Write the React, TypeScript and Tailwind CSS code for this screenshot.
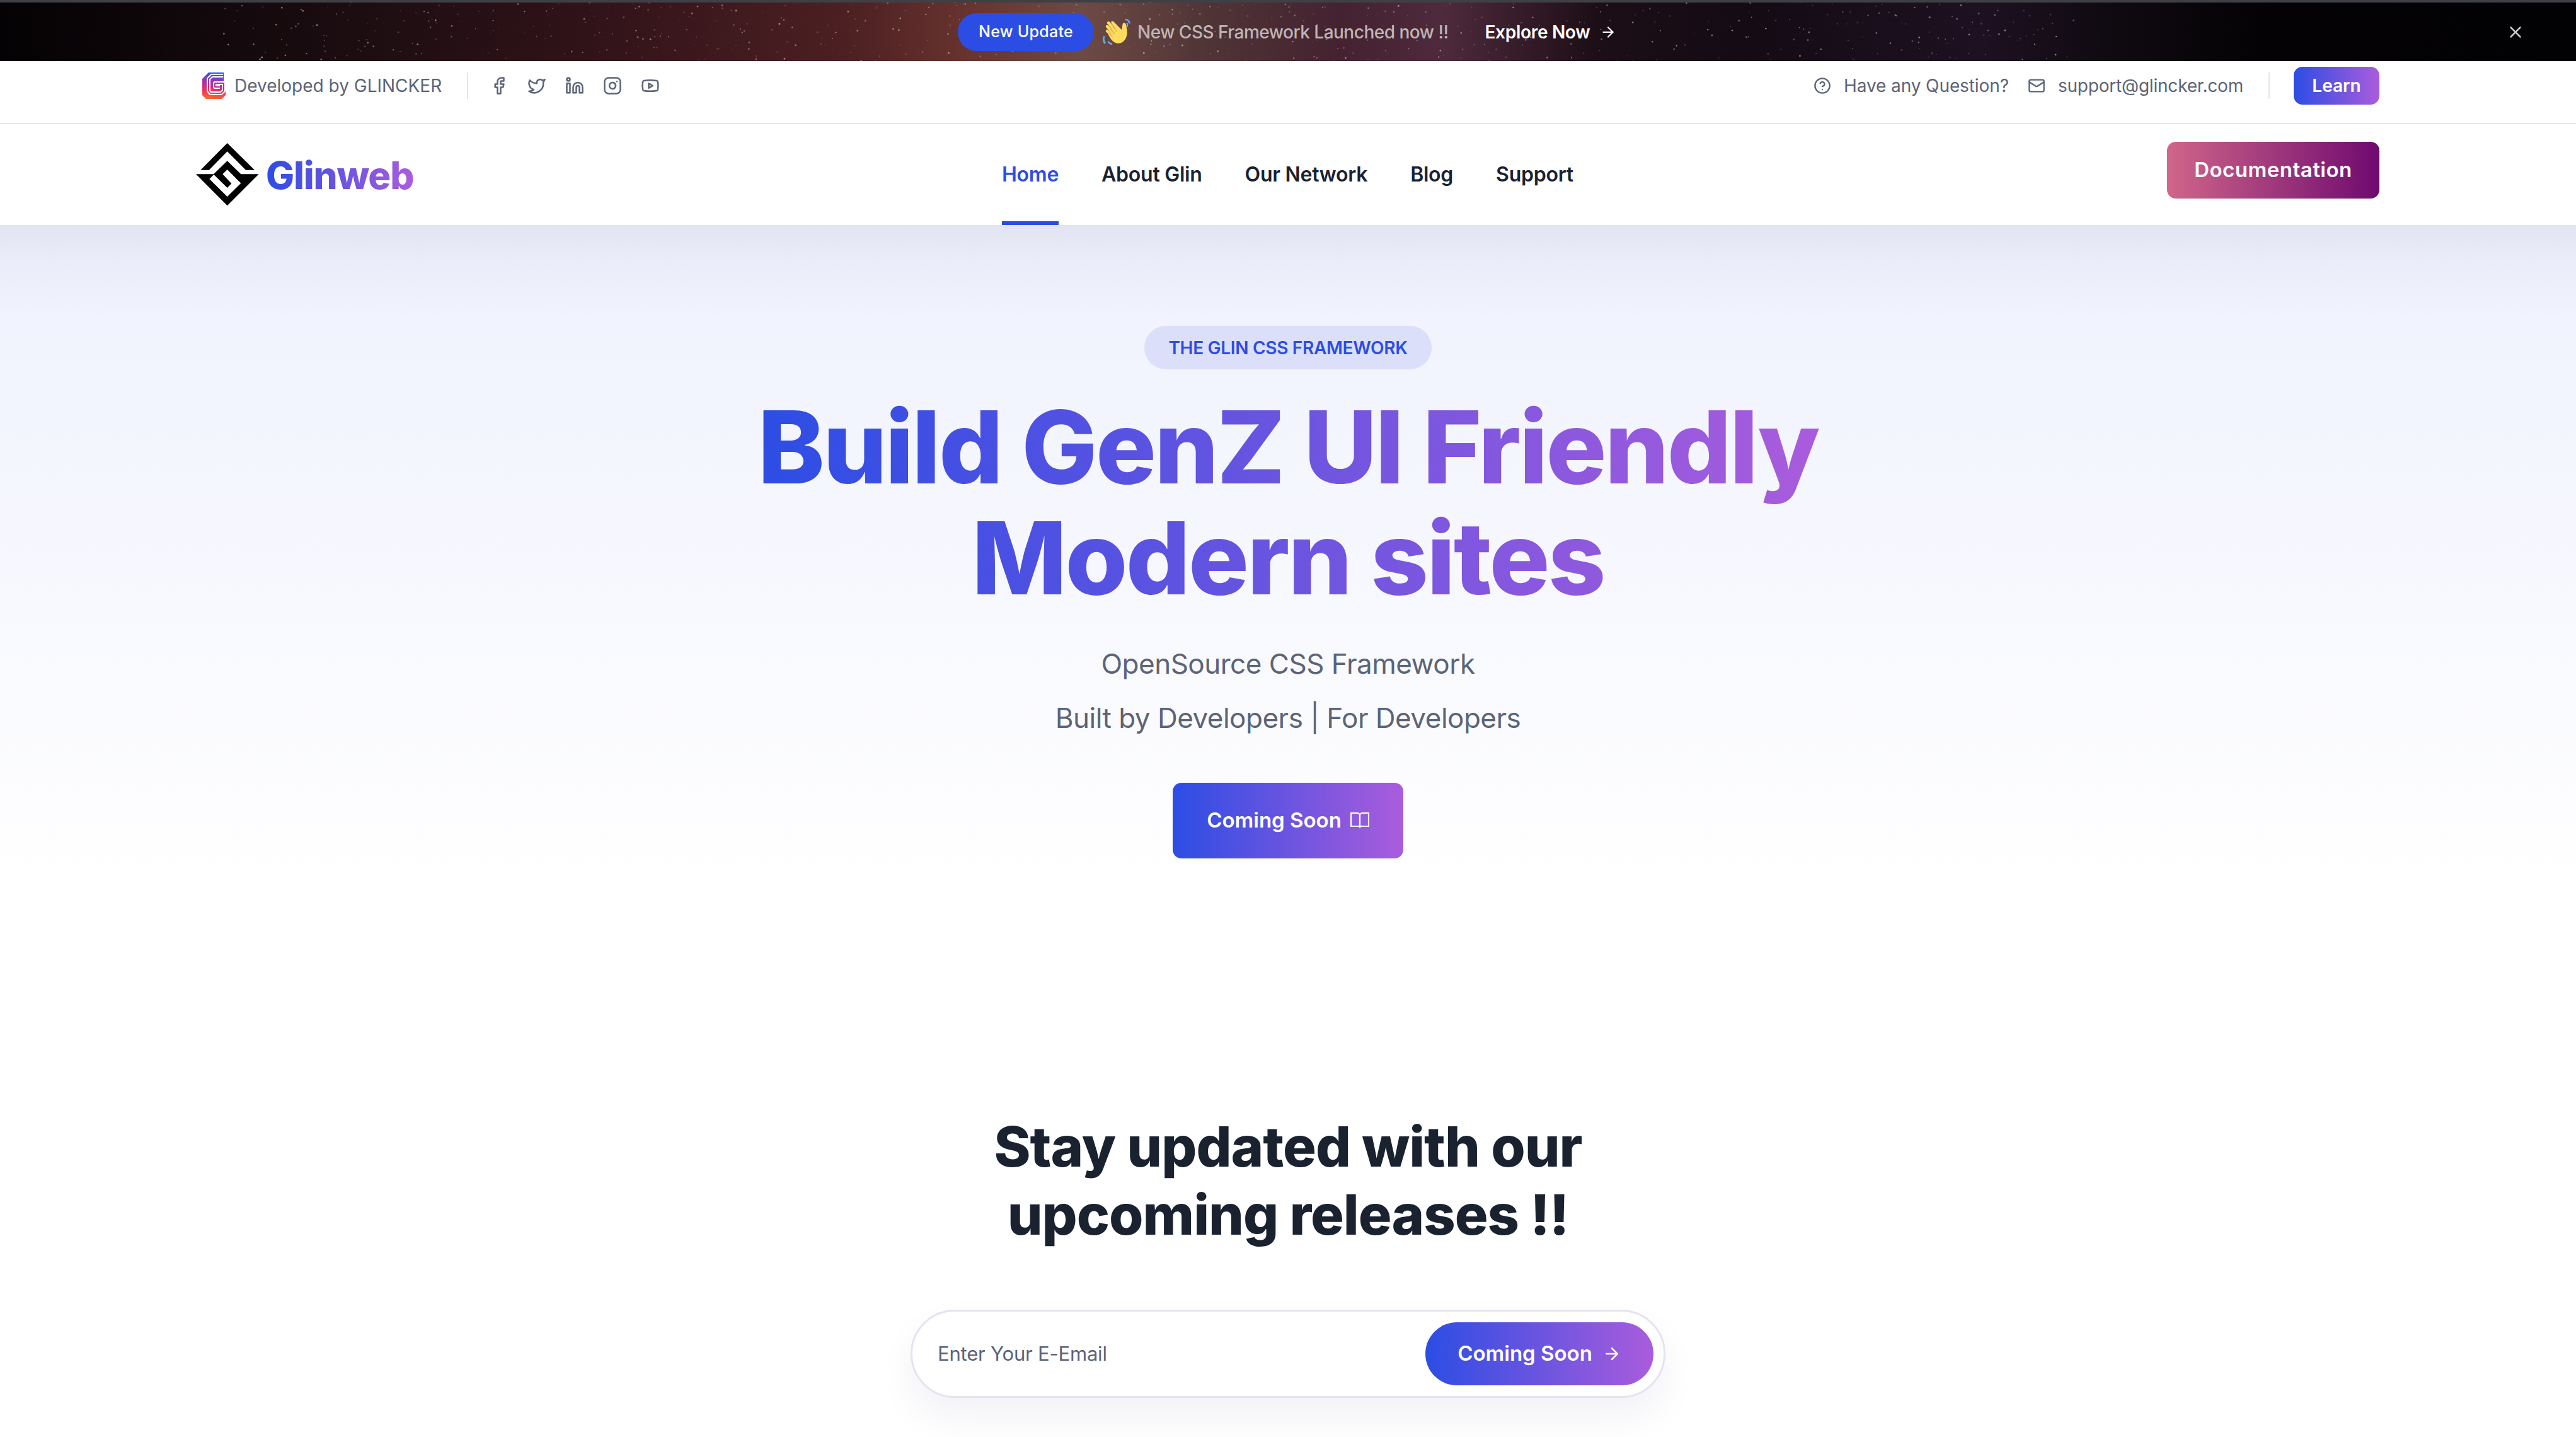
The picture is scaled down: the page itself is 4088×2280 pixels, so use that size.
import { ArrowRight, CircleHelp, Facebook, Instagram, Linkedin, Mail, Twitter, X, Youtube } from "lucide-react";

const FONT = "font-['Inter','Noto_Sans',sans-serif]";

function seeded(n: number) {
  let s = 12345;
  const r = () => {
    s = (s * 16807) % 2147483647;
    return s / 2147483647;
  };
  return Array.from({ length: n }, () => ({ x: 350 + r() * 2950, y: r() * 93, o: 0.08 + r() * 0.42, s: 0.6 + r() * 0.9 }));
}

function Stars() {
  const stars = seeded(560);
  return (
    <svg className="absolute inset-0 h-full w-full" viewBox="0 0 4088 93" preserveAspectRatio="none">
      {stars.map((p, i) => (
        <circle key={i} cx={p.x} cy={p.y} r={p.s} fill="#fff" opacity={p.o} />
      ))}
    </svg>
  );
}

function Wave() {
  return (
    <svg width="44" height="46" viewBox="2.500 3.500 30 30" className="shrink-0">
      <path fill="#5dadec" d="M5 23c-1 2-1 5 1 7l-1.500 1.200C2 29 2 25 3.500 22.500zM9 28c1 1.500 2 2 4 2.500l-.5 1.800c-2.500-.5-4-1.800-5-3.300zM27 4c3 0 5 2 5.500 5l-1.800.4C30.300 7 29 5.800 27 5.800zM28 9l1.600-.4c.7 2 .5 3-.1 4.400l-1.500-.7c.4-1 .4-2 0-3.300z" />
      <path fill="#ffdc5d" d="M8 20 6 18c-1-1 .5-3 2-2l4 4-6-7c-1-1.500 1-3 2.400-1.800l6 6.600-7-8.500c-1-1.500 1-3.200 2.400-2l7 8-5-6.500c-1-1.500 1-3 2.400-1.800L23 16l1-6c.3-2 3-2.300 3.500 0 1 4 2 8 1 12-1.500 7-8 11-14 7-3-2-5-6-6.500-9z" />
      <path fill="none" stroke="#ef9645" strokeWidth="0.7" d="M13 12l5 6M10.500 15l5 5.500M9 19l4 4" />
    </svg>
  );
}

function GMark() {
  return (
    <svg width="37" height="42" viewBox="0 0 37 42" className="shrink-0">
      <defs>
        <linearGradient id="gm" gradientUnits="userSpaceOnUse" x1="20" y1="0" x2="16" y2="42">
          <stop offset="0" stopColor="#2456f5" />
          <stop offset="0.45" stopColor="#c02a9a" />
          <stop offset="0.72" stopColor="#f5305c" />
          <stop offset="1" stopColor="#fb6a2c" />
        </linearGradient>
      </defs>
      <path fill="url(#gm)" d="M10 0h24v13l3 3v20l-6 6H6l-6-6V10z" />
      <path fill="none" stroke="#fff" strokeWidth="6" strokeLinejoin="round" d="M33 5H15l-5 5v19l3 4h17l4-4V17H20v6h8" />
      <path fill="none" stroke="url(#gm)" strokeWidth="2" strokeLinejoin="round" d="M33 5H15l-5 5v19l3 4h17l4-4V17H20v6h8" />
    </svg>
  );
}

function Diamond() {
  return (
    <svg width="100" height="100" viewBox="0 0 100 100" className="shrink-0">
      <path fill="#000" d="M7.300 42.700 49.700 0 93 42.700H79L49.700 13.300 20.700 42.700z" />
      <path fill="#000" d="M0 49.300H28L49.700 28.300 71.300 49.300H99.700L49.700 99.300z" />
      <path fill="#fff" d="M21.300 57 49.700 85 71.300 63.700 49.700 42 42.300 49.300 56.300 64.300 49.700 71 28.300 50z" />
    </svg>
  );
}

function BookIcon() {
  return (
    <svg width="30" height="30" viewBox="0 0 30 30" fill="none" stroke="currentColor" strokeWidth="2.200" strokeLinejoin="round" className="shrink-0">
      <path d="M1 3h10a4 4 0 0 1 4 4v18.500a3 3 0 0 0-3-1.500H1zM29 3H19a4 4 0 0 0-4 4v18.500a3 3 0 0 1 3-1.500h11z" />
    </svg>
  );
}

export default function App() {
  return (
    <div className={`h-[2280px] w-[4088px] overflow-hidden bg-white ${FONT}`}>
      <div className="h-1 bg-[#3e4046]" />

      <div className="relative flex h-[93px] items-center bg-[linear-gradient(90deg,#040204_0%,#1c0d11_14%,#33141a_24%,#4d2022_33%,#6a3530_38%,#6d4a44_42%,#4f3436_47%,#442230_52%,#4e2a3c_56%,#1c0e16_62%,#140b14_68%,#1e1122_77%,#0f0a10_82%,#040205_88%,#020103_100%)]">
        <Stars />
        <div className="relative flex w-full items-center pl-[1520px] pr-[81px]">
          <div className="flex h-[60px] w-[216px] items-center justify-center rounded-full bg-[#2c4de4] text-[25px] font-medium tracking-[0.3px] text-white">New Update</div>
          <div className="ml-[14px]"><Wave /></div>
          <span className="ml-[11px] whitespace-nowrap text-[28px] font-medium tracking-[-0.5px] text-[#bfb5b5]">New CSS Framework Launched now !!</span>
          <span className="ml-[58px] whitespace-nowrap text-[28px] font-semibold tracking-[-0.3px] text-white">Explore Now</span>
          <ArrowRight className="ml-[16px] text-white" size={26} strokeWidth={2} />
          <X className="ml-auto text-[#c8c8c8]" size={30} strokeWidth={2} />
        </div>
      </div>

      <div className="flex h-[98px] items-start pl-[321px] pr-[312px]">
        <div className="mt-[18px] flex items-center">
          <GMark />
          <span className="ml-[14px] whitespace-nowrap text-[28px] tracking-[0px] text-[#5c6478]">Developed by GLINCKER</span>
          <div className="ml-[40px] h-[42px] w-[2px] bg-[#e3e3f1]" />
          <div className="ml-[34px] flex items-center gap-[30px] text-[#5c6478]">
            <Facebook size={30} strokeWidth={2} />
            <Twitter size={30} strokeWidth={2} />
            <Linkedin size={30} strokeWidth={2} />
            <Instagram size={30} strokeWidth={2} />
            <Youtube size={30} strokeWidth={2} />
          </div>
        </div>
        <div className="ml-auto mt-[9px] flex items-center text-[#5c6478]">
          <CircleHelp size={28} strokeWidth={2} />
          <span className="ml-[20px] whitespace-nowrap text-[28px] tracking-[-0.1px]">Have any Question?</span>
          <Mail className="ml-[30px]" size={28} strokeWidth={2} />
          <span className="ml-[20px] whitespace-nowrap text-[28px] tracking-[-0.2px]">support@glincker.com</span>
          <div className="ml-[40px] h-[42px] w-[2px] bg-[#e3e3f1]" />
          <div className="ml-[38px] flex h-[60px] w-[136px] items-center justify-center rounded-[14px] bg-[linear-gradient(90deg,#2c4de4,#aa5cdc)] text-[28px] font-semibold text-white">Learn</div>
        </div>
      </div>

      <div className="relative z-10 flex h-[162px] items-start border-t-2 border-[#e3e3f1] bg-white pl-[311px] pr-[312px]">
        <div className="mt-[30px] flex items-center">
          <Diamond />
          <span className="ml-[11px] mt-[2px] bg-[linear-gradient(90deg,#2c4de4,#aa5cdc)] bg-clip-text text-[60px] font-extrabold leading-none tracking-[-1.2px] text-transparent">Glinweb</span>
        </div>
        <nav className="absolute left-[1590px] top-0 flex h-full items-stretch gap-[68px] text-[32px] font-semibold tracking-[-0.25px] text-[#1a2230]">
          <a className="flex items-center border-b-[6px] border-[#2c4de4] pt-[6px] text-[#2c4de4]">Home</a>
          <a className="flex items-center border-b-[6px] border-transparent pt-[6px]">About Glin</a>
          <a className="flex items-center border-b-[6px] border-transparent pt-[6px]">Our Network</a>
          <a className="flex items-center border-b-[6px] border-transparent pt-[6px]">Blog</a>
          <a className="flex items-center border-b-[6px] border-transparent pt-[6px]">Support</a>
        </nav>
        <div className="ml-auto mt-[28px] flex h-[90px] w-[337px] items-center justify-center rounded-[14px] bg-[linear-gradient(90deg,#d0668a,#6f0a6f)] text-[33px] font-semibold tracking-[0.5px] text-white">Documentation</div>
      </div>

      <section className="flex h-[1240px] flex-col items-center bg-[linear-gradient(180deg,#e2e4f2_0%,#ebedfa_5%,#f1f3fe_12%,#f7f8fe_45%,#ffffff_85%)] pt-[160px]">
        <div className="flex h-[69px] w-[456px] items-center justify-center rounded-full bg-[#dbdffa] text-[28px] font-semibold tracking-[-0.3px] text-[#2c4de4]">THE GLIN CSS FRAMEWORK</div>
        <h1 className="mt-[35px] w-[1700px] bg-[linear-gradient(90deg,#2c4de4,#aa5cdc)] bg-clip-text text-center text-[160px] font-extrabold leading-[176px] tracking-[-2.8px] text-transparent">
          Build GenZ UI Friendly
          <br />
          Modern sites
        </h1>
        <p className="mt-[37px] text-[44px] leading-[86px] tracking-[-0.5px] text-[#5c6478]">OpenSource CSS Framework</p>
        <p className="text-[44px] leading-[86px] tracking-[-0.5px] text-[#5c6478]">Built by Developers | For Developers</p>
        <div className="mt-[60px] flex h-[120px] w-[366px] items-center justify-center gap-[14px] rounded-[14px] bg-[linear-gradient(90deg,#2c4de4,#aa5cdc)] text-[33px] font-semibold text-white">
          Coming Soon
          <BookIcon />
        </div>
      </section>

      <section className="flex flex-col items-center pt-[168px]">
        <h2 className="text-center text-[88px] font-extrabold leading-[108px] tracking-[-1px] text-[#1a2230]">
          Stay updated with our
          <br />
          upcoming releases !!
        </h2>
        <div className="mt-[97px] flex h-[140px] w-[1198px] items-center justify-between rounded-full border-[3px] border-[#e3e3f1] bg-white pl-[40px] pr-[16px] shadow-[0_30px_60px_rgba(40,40,100,0.06)]">
          <span className="text-[31px] tracking-[-0.2px] text-[#5c6478]">Enter Your E-Email</span>
          <div className="flex h-[100px] w-[362px] items-center justify-center gap-[16px] rounded-full bg-[linear-gradient(90deg,#2c4de4,#aa5cdc)] text-[33px] font-semibold text-white">
            Coming Soon
            <ArrowRight size={30} strokeWidth={2} />
          </div>
        </div>
      </section>
    </div>
  );
}
